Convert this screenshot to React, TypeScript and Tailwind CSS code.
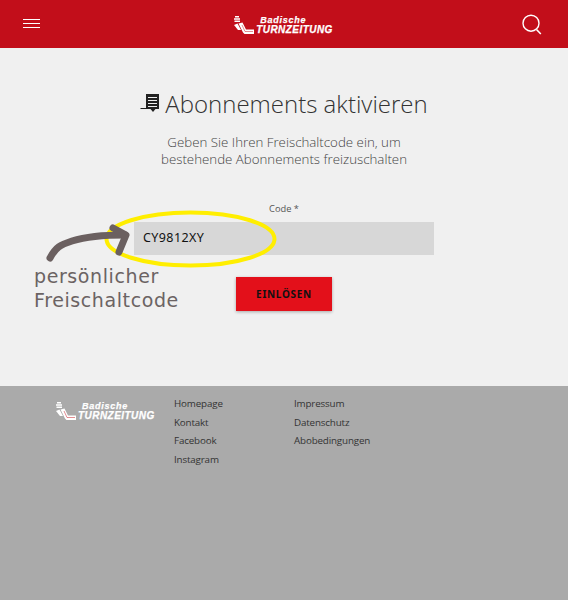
import React from "react";

function Logo({ className }: { className?: string }) {
  return (
    <div className={"flex items-end text-white " + (className ?? "")}>
      <svg width="22" height="20" viewBox="0 0 22 20" className="shrink-0">
        <path d="M2 1h4v1.500H2zM1 3.200h6v1.500H1zM1.500 5.400h5.500v1.500H1.500z" fill="#fff" />
        <path d="M1 10l3.500-1.500L8 15h-3z" fill="#fff" />
        <path d="M5.500 8.500l4-1 3.500 7h8v4.500h-9.500l-1.500-1.500z" fill="#fff" />
        <path d="M9 10l3 6.500h8" stroke="#c20e1a" strokeWidth="0.8" fill="none" opacity="0.6" />
      </svg>
      <div className="ml-[1px] flex flex-col font-['Liberation_Sans',sans-serif] font-bold italic [-webkit-text-stroke:0.25px_white]">
        <span className="ml-[4px] text-[9px] leading-[10px] tracking-[0.75px]">Badische</span>
        <span className="text-[10px] leading-[10px] tracking-[0.45px] whitespace-nowrap">TURNZEITUNG</span>
      </div>
    </div>
  );
}

export default function App() {
  return (
    <div className="relative flex h-[600px] w-[568px] flex-col overflow-hidden bg-[#f0f0f0] font-['Open_Sans',sans-serif]">
      <header className="flex h-[48px] shrink-0 items-center justify-between bg-[#c20e1a] pl-[23px] pr-[26px]">
        <div className="mb-[1px] flex w-[17px] flex-col gap-[2.500px]">
          <div className="h-[1.500px] bg-white" />
          <div className="h-[1.500px] bg-white" />
          <div className="h-[1.500px] bg-white" />
        </div>
        <Logo className="ml-[4px] mb-[-1px]" />
        <svg width="20" height="21" viewBox="0 0 20 21" fill="none" stroke="#fff" strokeWidth="1.400">
          <circle cx="9" cy="9.200" r="8" />
          <path d="M14.500 15.500l4.300 4.500" strokeWidth="1.600" />
        </svg>
      </header>

      <main className="flex h-[338px] shrink-0 flex-col items-center">
        <div className="mt-[39px] flex items-center">
          <svg width="20" height="20" viewBox="0 0 20 20" className="mr-[5px] mt-[-2px]">
            <path d="M6 1h13v15h-3.500l-2.500 3-2.500-3H6z" fill="#222" />
            <path d="M8 4.500h9M8 7.500h9M8 10.500h9M8 13.500h9" stroke="#f0f0f0" strokeWidth="1" />
            <path d="M0.500 15.500h6" stroke="#222" strokeWidth="1" />
          </svg>
          <h1 className="text-[24px] leading-[34px] font-light text-[#333]">Abonnements aktivieren</h1>
        </div>
        <p className="mt-[13px] text-center text-[13.300px] leading-[17px] font-light text-[#444]">
          Geben Sie Ihren Freischaltcode ein, um
          <br />
          bestehende Abonnements freizuschalten
        </p>
        <div className="mt-[34px] flex flex-col items-center">
          <label className="text-[9.300px] leading-[14px] text-[#555]">Code *</label>
          <div className="mt-[6px] flex h-[33px] w-[300px] items-center bg-[#d7d7d7] pl-[9px] font-['Noto_Sans',sans-serif] text-[12.500px] font-normal tracking-[0.4px] text-[#111]">
            CY9812XY
          </div>
        </div>
        <button className="mt-[22px] h-[34px] w-[96px] bg-[#e3101a] font-['Noto_Sans',sans-serif] text-[10px] font-bold tracking-[0.7px] text-[#111] shadow-[0_1px_3px_rgba(0,0,0,0.3)]">
          EINLÖSEN
        </button>
      </main>

      <footer className="flex flex-1 items-start bg-[#aaaaaa] text-[9.800px] leading-[18.700px] tracking-[-0.15px] text-[#333]">
        <Logo className="mt-[15px] ml-[55px] w-[119px]" />
        <ul className="mt-[9px] w-[120px]">
          <li>Homepage</li>
          <li>Kontakt</li>
          <li>Facebook</li>
          <li>Instagram</li>
        </ul>
        <ul className="mt-[9px]">
          <li>Impressum</li>
          <li>Datenschutz</li>
          <li>Abobedingungen</li>
        </ul>
      </footer>

      <svg className="absolute top-[205px] left-[40px]" width="245" height="70" viewBox="0 0 245 70" fill="none">
        <ellipse cx="150.500" cy="34" rx="84" ry="26.500" stroke="#ffee00" strokeWidth="4" />
        <path d="M10 53c6-11 10-13 22-17 16-5 36-6 53-6" stroke="#6b6060" strokeWidth="7" strokeLinecap="round" />
        <path d="M73 23l13 7-7 17" stroke="#6b6060" strokeWidth="7" strokeLinecap="round" strokeLinejoin="round" />
      </svg>
      <div className="absolute top-[264px] left-[34px] font-['DejaVu_Sans',sans-serif] text-[19px] leading-[24px] tracking-[0.6px] text-[#6b6363]">
        persönlicher
        <br />
        Freischaltcode
      </div>
    </div>
  );
}
